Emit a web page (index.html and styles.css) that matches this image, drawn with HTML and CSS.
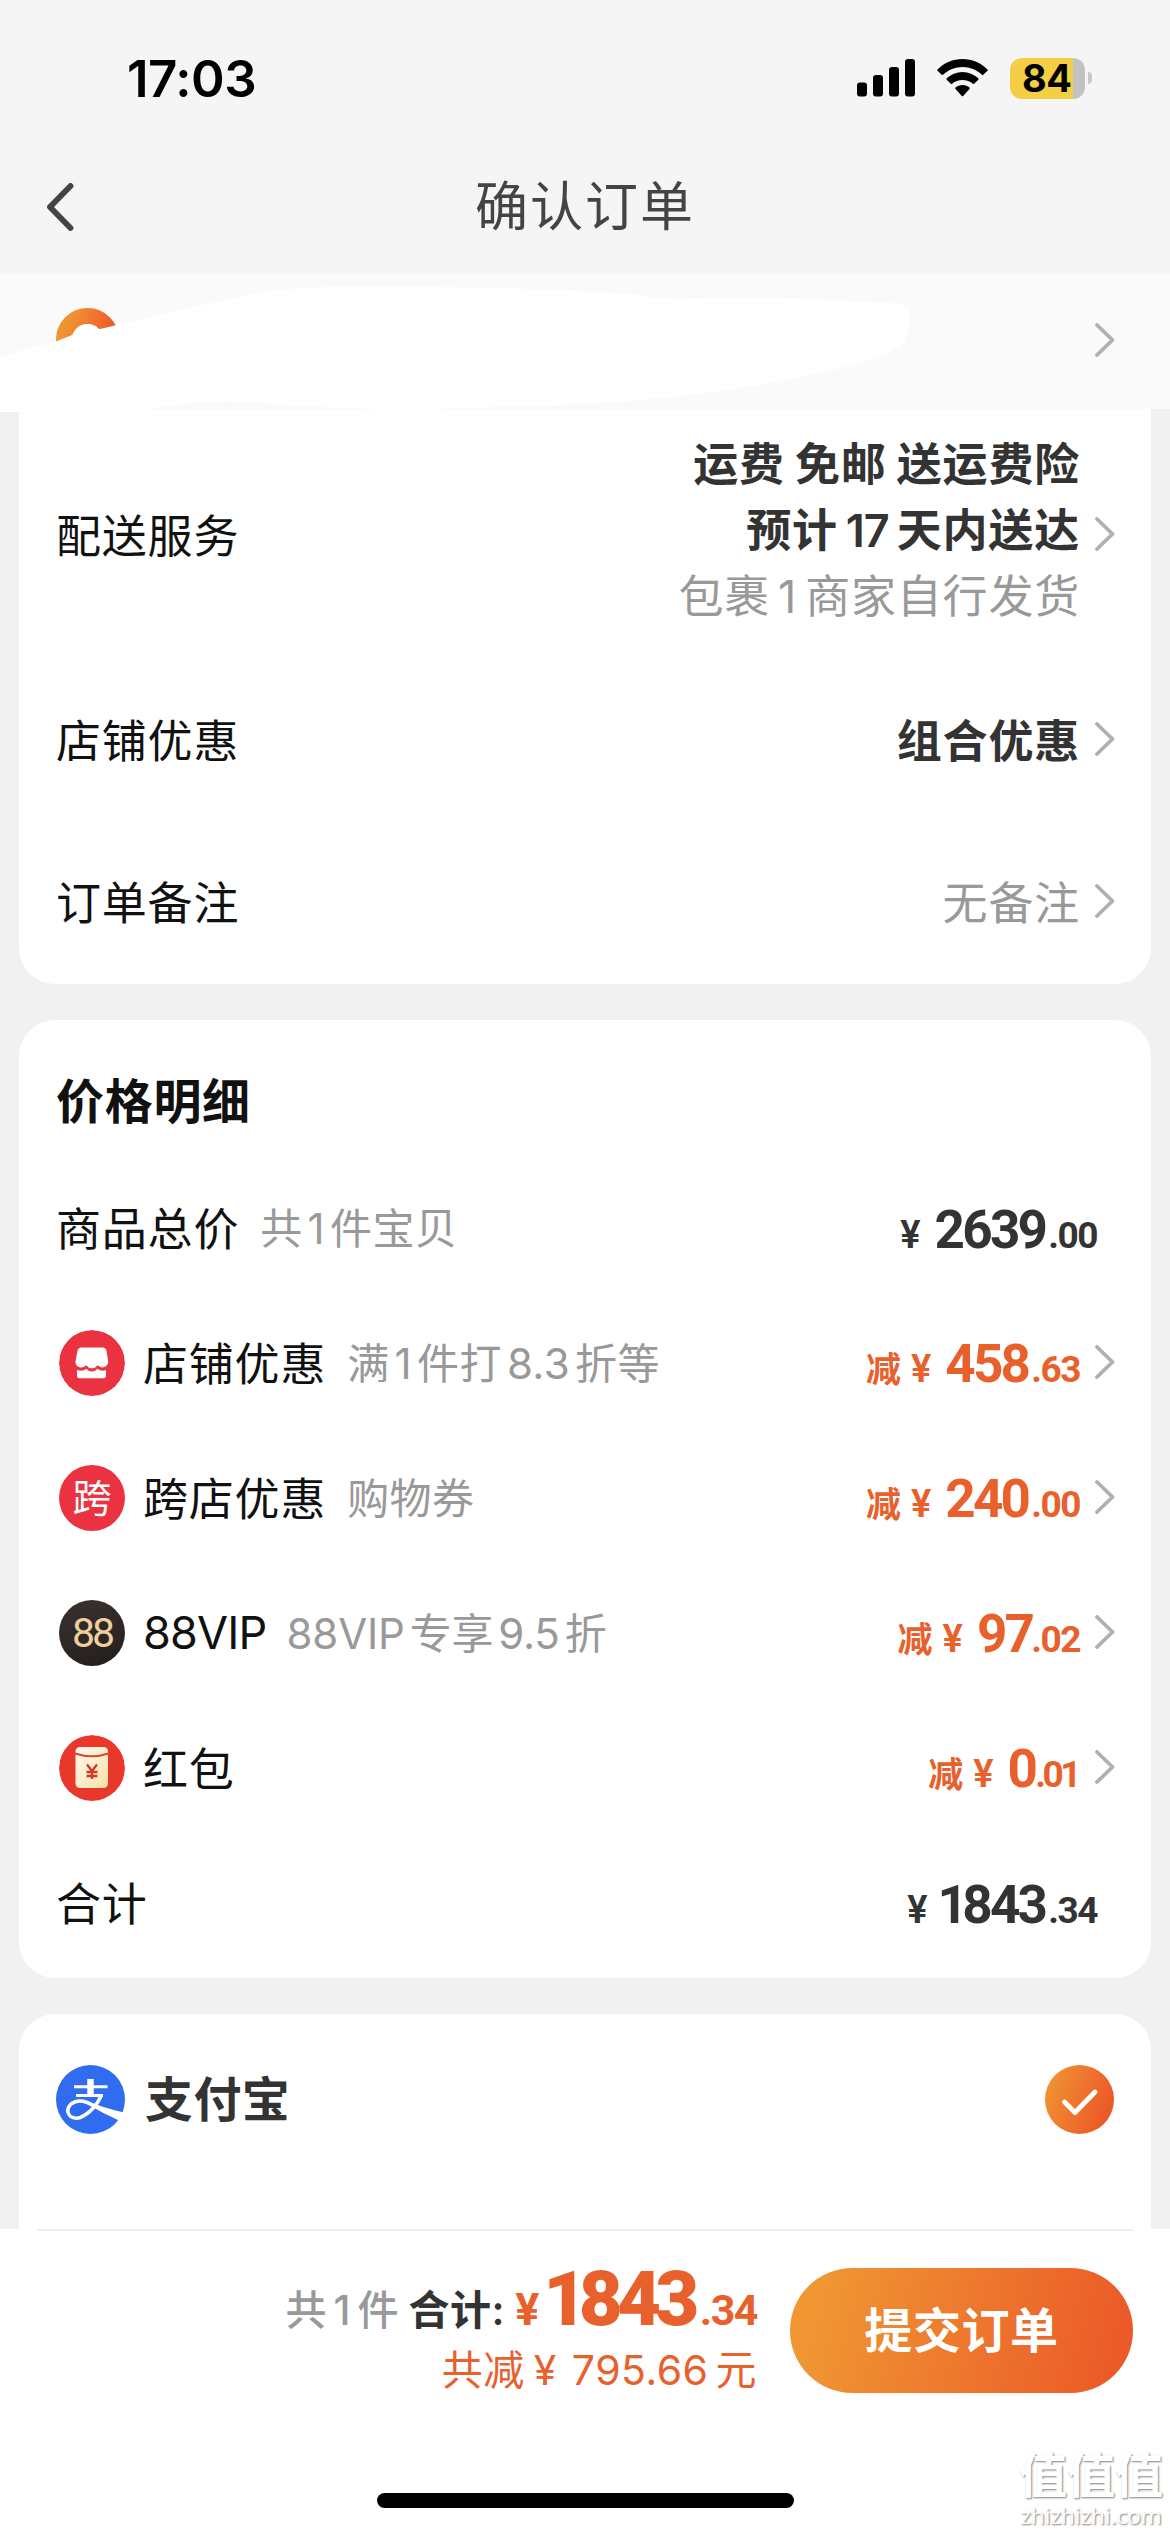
FILE: index.html
```html
<!DOCTYPE html>
<html lang="zh-CN">
<head>
<meta charset="utf-8">
<title>确认订单</title>
<link rel="stylesheet" href="styles.css">
</head>
<body>
<svg class="defs" width="0" height="0">
  <defs>
    <symbol id="chevron" viewBox="0 0 20 34"><path d="M2 2 L17.5 17 L2 32" fill="none" stroke="#b0b0b0" stroke-width="3.8" stroke-linecap="round" stroke-linejoin="round"/></symbol>
    <linearGradient id="orange" x1="0" y1="0.3" x2="1" y2="0.7"><stop offset="0" stop-color="#f09333"/><stop offset="1" stop-color="#ec5426"/></linearGradient>
  </defs>
</svg>

<header class="top">
  <div class="status">
    <span class="time">17:03</span>
    <div class="status-icons">
      <svg width="59" height="38" viewBox="0 0 59 38"><rect x="0" y="23.500" width="10" height="14" rx="3"/><rect x="16" y="16" width="10" height="21.500" rx="3"/><rect x="32" y="8" width="10" height="29.500" rx="3"/><rect x="48" y="0" width="10" height="37.500" rx="3"/></svg>
      <svg class="wifi" width="51" height="38" viewBox="0 0 51 38"><path d="M25.500 0C35 0 44 4 50.500 10.500Q51 11.200 50.500 11.800L46.300 15.800Q45.700 16.300 45 15.700C39.500 10.800 33 8 25.500 8S11.500 10.800 6 15.700Q5.300 16.300 4.700 15.800L.5 11.800Q0 11.200.5 10.500C7 4 16 0 25.500 0ZM25.500 13C31.500 13 37 15.300 41.300 19.300Q41.900 20 41.300 20.700L37.200 24.700Q36.500 25.300 35.800 24.700C33 22.300 29.500 21 25.500 21S18 22.300 15.200 24.700Q14.500 25.300 13.800 24.700L9.700 20.700Q9.100 20 9.700 19.300C14 15.300 19.500 13 25.500 13ZM25.500 26C28.300 26 30.700 27 32.500 28.600Q33.100 29.300 32.500 30L26.200 37Q25.500 37.600 24.800 37L18.500 30Q17.900 29.300 18.500 28.600C20.300 27 22.700 26 25.500 26Z"/></svg>
      <div class="battery"><span class="cell">84</span><i class="nub"></i></div>
    </div>
  </div>
  <div class="nav">
    <svg class="back" width="28" height="48" viewBox="0 0 28 48"><path d="M24.500 3 L4 24 L24.500 45" fill="none" stroke="#444" stroke-width="5.800" stroke-linecap="round" stroke-linejoin="round"/></svg>
    <h1>确认订单</h1>
  </div>
</header>

<section class="address">
  <svg class="cover" width="920" height="139" viewBox="0 273 920 139">
    <circle cx="87.500" cy="339.500" r="23.500" fill="none" stroke="url(#orange)" stroke-width="16"/>
    <circle cx="87.500" cy="339.500" r="15.500" fill="#fff"/>
    <path fill="#fff" d="M0 358Q25 348 40 346L57 341L72 335L100 329L117 325Q190 307 270 291Q300 287 340 287Q500 285 640 295Q660 300 690 299Q800 297 880 303Q905 301 909 312Q911 325 904 342Q897 351 860 363Q760 390 620 402Q400 414 270 404Q230 399 190 403Q150 409 110 412L0 412Z"/>
  </svg>
  <svg class="chev" width="20" height="34"><use href="#chevron"/></svg>
</section>

<main>
  <section class="card service">
    <div class="row delivery">
      <span class="label">配送服务</span>
      <div class="lines">
        <p class="strong">运费 免邮 送运费险</p>
        <p class="strong"><span>预计</span><span class="n">17</span><span>天内送达</span></p>
        <p class="muted"><span>包裹</span><span class="n">1</span><span>商家自行发货</span></p>
      </div>
      <svg class="chev" width="20" height="34"><use href="#chevron"/></svg>
    </div>
    <div class="row discount">
      <span class="label">店铺优惠</span>
      <span class="value strong">组合优惠</span>
      <svg class="chev" width="20" height="34"><use href="#chevron"/></svg>
    </div>
    <div class="row remark">
      <span class="label">订单备注</span>
      <span class="value muted">无备注</span>
      <svg class="chev" width="20" height="34"><use href="#chevron"/></svg>
    </div>
  </section>

  <section class="card prices">
    <h2>价格明细</h2>
    <div class="row">
      <span class="label">商品总价</span>
      <span class="note"><span>共</span><span class="n">1</span><span>件宝贝</span></span>
      <div class="amount total"><span class="yen">¥</span><b>2639</b><small>.00</small></div>
    </div>
    <div class="row">
      <svg class="icon" width="66" height="66" viewBox="0 0 66 66"><circle cx="33" cy="33" r="33" fill="#ea3241"/><path fill="#fff" d="M22 17.500H44Q46.500 17.500 47.300 20L49.200 31Q49.500 36 44 37.500Q41 37.500 38.500 35.200Q36 38.500 33 38.200Q29.500 38.500 27.300 35.200Q24.500 38 21 37.500Q16 36 16.500 31L18.700 20Q19.500 17.500 22 17.500ZM18 40Q24 42 27.300 38.700Q30 41.800 33 41.500Q36 41.500 38.500 38.700Q42 42 47 40V45.500Q47 48.300 44.500 48.300H20.500Q18 48.300 18 45.500Z"/></svg>
      <span class="label">店铺优惠</span>
      <span class="note"><span>满</span><span class="n">1</span><span>件打</span><span class="n">8.3</span><span>折等</span></span>
      <div class="amount"><em>减</em><span class="yen">¥</span><b>458</b><small>.63</small></div>
      <svg class="chev" width="20" height="34"><use href="#chevron"/></svg>
    </div>
    <div class="row">
      <span class="icon cross">跨</span>
      <span class="label">跨店优惠</span>
      <span class="note">购物券</span>
      <div class="amount"><em>减</em><span class="yen">¥</span><b>240</b><small>.00</small></div>
      <svg class="chev" width="20" height="34"><use href="#chevron"/></svg>
    </div>
    <div class="row">
      <span class="icon vip">88</span>
      <span class="label latin">88VIP</span>
      <span class="note vipnote"><span>88VIP</span><span class="n">专享</span><span>9.5</span><span class="n">折</span></span>
      <div class="amount"><em>减</em><span class="yen">¥</span><b class="snug">97</b><small>.02</small></div>
      <svg class="chev" width="20" height="34"><use href="#chevron"/></svg>
    </div>
    <div class="row">
      <svg class="icon" width="66" height="66" viewBox="0 0 66 66"><defs><linearGradient id="cream" x1="0" y1="0" x2="1" y2="1"><stop offset="0" stop-color="#fffaf0"/><stop offset="1" stop-color="#f8e2a8"/></linearGradient></defs><circle cx="33" cy="33" r="33" fill="#e9382b"/><rect x="16.500" y="12" width="32.500" height="41" rx="4.500" fill="url(#cream)"/><path d="M16 18.500Q33 24 49.500 18.500" fill="none" stroke="#d9462f" stroke-width="2.200"/><path d="M28 29.500L33 36L38 29.500M33 36V44M27.500 37H38.500M27.500 41H38.500" fill="none" stroke="#cf3a2c" stroke-width="2.300"/></svg>
      <span class="label">红包</span>
      <div class="amount wide"><em>减</em><span class="yen">¥</span><b>0</b><small>.01</small></div>
      <svg class="chev" width="20" height="34"><use href="#chevron"/></svg>
    </div>
    <div class="row">
      <span class="label">合计</span>
      <div class="amount total"><span class="yen">¥</span><b><i class="one">1</i>843</b><small>.34</small></div>
    </div>
  </section>

  <section class="card pay">
    <svg width="69" height="69" viewBox="0 0 69 69"><circle cx="34.500" cy="34.500" r="34.500" fill="#2f6cf0"/><g fill="none" stroke="#fff"><path d="M34.500 14V29" stroke-width="6.500"/><path d="M18 21.800H51.500" stroke-width="3"/><path d="M20 30.500H47" stroke-width="3"/><path d="M45.500 30Q40 43 29 50Q20 56 14 51Q9 45 15 39Q24 32 38 41" stroke-width="3.500"/></g><path fill="#fff" d="M33 36.500Q46 42.500 68 47.500Q66.500 52 63 55.500Q48 49 33 40Z"/></svg>
    <span class="payname">支付宝</span>
    <svg class="check" width="69" height="69" viewBox="0 0 69 69"><circle cx="34.500" cy="34.500" r="34.500" fill="url(#orange)"/><path d="M19.500 37L30 47.500L50 27" fill="none" stroke="#fff" stroke-width="4.800" stroke-linecap="round" stroke-linejoin="round"/></svg>
  </section>
</main>

<footer>
  <div class="submit-bar">
    <div class="summary">
      <div class="sum"><span class="count">共<i>1</i>件</span><span class="sumlabel">合计:</span><span class="yen">¥</span><b><i class="one">1</i>843</b><small>.34</small></div>
      <div class="saved"><span>共减</span><span class="yen">¥</span><span>795.66</span><span class="yuan">元</span></div>
    </div>
    <button>提交订单</button>
  </div>
  <div class="home"></div>
  <div class="watermark"><strong>值值值</strong><span>zhizhizhi.com</span></div>
</footer>
</body>
</html>
```
FILE: styles.css
```css
* { box-sizing: border-box; margin: 0; padding: 0; }
body { width: 1170px; height: 2532px; overflow: hidden; background: #f1f1f1; color: #111; font-family: Inter, "Noto Sans CJK SC", sans-serif; display: flex; flex-direction: column; }
.defs { position: absolute; }
svg { flex: none; display: block; }
em, i { font-style: normal; }

.top { height: 273px; background: #f5f5f5; }
.status { height: 156px; padding: 0 78px 0 127px; display: flex; align-items: center; justify-content: space-between; }
.time { font-size: 51px; font-weight: 600; letter-spacing: -0.5px; color: #000; }
.status-icons { display: flex; align-items: center; }
.wifi { margin: 0 22px 0 21px; }
.battery { display: flex; align-items: center; gap: 3px; }
.cell { width: 75px; height: 41px; border-radius: 12px; background: linear-gradient(90deg, #f4cf45 63px, #c2c2c2 63px); color: #000; font-size: 38px; line-height: 41px; font-weight: 700; padding-left: 12px; letter-spacing: -0.5px; }
.nub { width: 4px; height: 12px; border-radius: 0 4px 4px 0; background: #c8c8c8; }
.nav { height: 102px; display: grid; grid-template-columns: 46px 1fr 46px; align-items: center; }
.back { margin-left: 46px; }
.nav h1 { font-size: 53px; line-height: 102px; font-weight: 400; color: #444; letter-spacing: 2px; text-align: center; }

.address { height: 136px; background: #fafafa; display: flex; align-items: center; justify-content: space-between; padding-right: 55px; }
.cover { align-self: flex-start; margin-bottom: -3px; position: relative; z-index: 1; }

main { flex: none; height: 1820px; display: flex; flex-direction: column; gap: 36px; padding: 0 19px; overflow: hidden; }
.card { background: #fff; border-radius: 36px; flex: none; }
.row { display: flex; align-items: center; padding: 0 36px 0 37px; }
.label { font-size: 45px; letter-spacing: 0.800px; white-space: nowrap; margin-top: -3px; }
.latin { letter-spacing: -0.800px; margin-top: 0; }
.chev { margin-left: 15px; margin-top: -2px; }
.strong { font-weight: 600; color: #333; }
.muted { color: #999; }

.service { height: 575px; border-radius: 0 0 36px 36px; }
.delivery { height: 252px; }
.discount { height: 158px; }
.remark { height: 165px; }
.value { font-size: 45px; letter-spacing: 0.800px; margin-left: auto; margin-top: -3px; }
.lines { margin-left: auto; margin-top: -8px; text-align: right; font-size: 45px; letter-spacing: 0.800px; word-spacing: -2px; }
.lines p { line-height: 66px; white-space: nowrap; }
.n { margin: 0 8px; }
.lines .strong .n { letter-spacing: -1px; }

.prices { height: 958px; padding-top: 37px; }
.prices h2 { height: 103px; padding-left: 37px; line-height: 90px; font-size: 48px; font-weight: 600; letter-spacing: 0.700px; color: #111; }
.prices .row { height: 135px; }
.icon { width: 66px; height: 66px; margin: 0 18px 0 3px; border-radius: 50%; flex: none; display: flex; align-items: center; justify-content: center; }
.cross { background: #ea3241; color: #fff; font-size: 39px; line-height: 66px; }
.vip { background: linear-gradient(160deg, #3b322f, #221e1d); color: #efcf9c; font: 400 41px/66px Roboto, sans-serif; letter-spacing: -3px; }
.note { font-size: 42px; letter-spacing: 0.400px; color: #999; margin-left: 21px; margin-top: -5px; white-space: nowrap; }
.note .n { margin: 0 5px; }
.vipnote { margin-left: 20px; letter-spacing: -0.200px; }
.amount { margin-left: auto; margin-top: 10px; display: flex; align-items: baseline; color: #e8602c; font-family: Roboto, "Noto Sans CJK SC", sans-serif; line-height: 60px; }
.amount em { font-size: 35px; font-weight: 600; margin-right: 10px; }
.amount .yen { font-size: 38px; font-weight: 600; margin-right: 14px; }
.amount b { font-size: 53px; font-weight: 700; letter-spacing: -2.700px; }
.amount small { font-size: 37px; font-weight: 700; letter-spacing: -1.500px; margin-left: 3px; }
.one { margin: 0 -3px 0 -4px; }
.amount .snug { margin-right: -4px; }
.total { color: #333; margin-right: 18px; }
.wide small { letter-spacing: -3.500px; padding-right: 2px; margin-left: 0; }

.pay { height: 300px; padding: 51px 37px 0; display: flex; align-items: flex-start; border-radius: 36px 36px 0 0; }
.payname { font-size: 48px; line-height: 69px; font-weight: 600; color: #333; margin-left: 20px; letter-spacing: 0.400px; }
.check { margin-left: auto; }

footer { position: relative; height: 303px; background: #fff; padding: 0 37px; }
.submit-bar { border-top: 2px solid #eee; height: 164px; padding-top: 37px; display: flex; justify-content: flex-end; gap: 33px; }
.summary { display: flex; flex-direction: column; align-items: flex-end; color: #e8602c; }
.sum { display: flex; align-items: baseline; height: 77px; line-height: 63px; font-family: Roboto, "Noto Sans CJK SC", sans-serif; font-weight: 700; }
.count, .sumlabel { font-family: Inter, "Noto Sans CJK SC", sans-serif; font-size: 41px; font-weight: 500; }
.count { color: #999; margin-right: 10px; }
.count i { margin: 0 7px; }
.sumlabel { color: #333; margin-right: 10px; letter-spacing: 0.500px; font-weight: 600; }
.sum .yen { font-size: 45px; margin-right: 8px; }
.sum b { font-size: 76px; letter-spacing: -5.700px; }
.sum small { font-size: 43px; letter-spacing: -1.500px; margin-left: 6px; }
.saved { display: flex; align-items: baseline; font-size: 41px; line-height: 56px; letter-spacing: 0.500px; }
.saved .yen { margin: 0 15px 0 9px; }
.yuan { margin-left: 7px; }
button { width: 343px; height: 125px; border: 0; border-radius: 63px; background: linear-gradient(105deg, #f09733 8%, #eb5928 95%); color: #fff; font: 600 48px/125px Inter, "Noto Sans CJK SC", sans-serif; letter-spacing: 0.600px; }
.home { width: 417px; height: 15px; border-radius: 8px; background: #000; margin: 100px 0 0 340px; }
.watermark { position: absolute; right: 7px; bottom: 4px; display: flex; flex-direction: column; align-items: center; color: #fff; text-shadow: 1px 1px 2px #999, 1px 1px 1px #bbb; }
.watermark strong { font-size: 48px; line-height: 56px; font-weight: 600; }
.watermark span { font: 22.500px/24px "Open Sans", sans-serif; }
```
